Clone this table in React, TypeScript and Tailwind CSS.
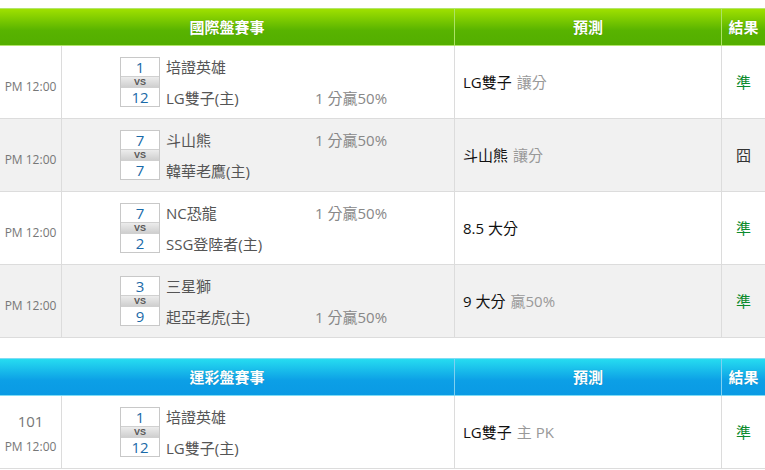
import React from "react";

type Match = {
  no?: string;
  time: string;
  s1: number;
  s2: number;
  t1: string;
  t2: string;
  hcap?: string;
  hcapRow?: 1 | 2;
  pred: string;
  predSub?: string;
  res: string;
};

const intl: Match[] = [
  { time: "PM 12:00", s1: 1, s2: 12, t1: "培證英雄", t2: "LG雙子(主)", hcap: "1 分贏50%", hcapRow: 2, pred: "LG雙子", predSub: "讓分", res: "準" },
  { time: "PM 12:00", s1: 7, s2: 7, t1: "斗山熊", t2: "韓華老鷹(主)", hcap: "1 分贏50%", hcapRow: 1, pred: "斗山熊", predSub: "讓分", res: "囧" },
  { time: "PM 12:00", s1: 7, s2: 2, t1: "NC恐龍", t2: "SSG登陸者(主)", hcap: "1 分贏50%", hcapRow: 1, pred: "8.5 大分", res: "準" },
  { time: "PM 12:00", s1: 3, s2: 9, t1: "三星獅", t2: "起亞老虎(主)", hcap: "1 分贏50%", hcapRow: 2, pred: "9 大分", predSub: "贏50%", res: "準" },
];

const sports: Match[] = [
  { no: "101", time: "PM 12:00", s1: 1, s2: 12, t1: "培證英雄", t2: "LG雙子(主)", pred: "LG雙子", predSub: "主 PK", res: "準" },
];

const cols = "grid grid-cols-[62px_393px_267px_1fr]";

function Header({ title, blue }: { title: string; blue?: boolean }) {
  const bg = blue
    ? "bg-[linear-gradient(to_bottom,#26dcf0,#0c9fe6_60%,#0a9ae4)] border-[#7fdcf4]"
    : "bg-[linear-gradient(to_bottom,#9fe000,#58b300_60%,#53ae00)] border-[#b3e46c]";
  const divider = blue ? "border-[#7fd0f0]" : "border-[#ace266]";
  return (
    <div className={`grid grid-cols-[455px_267px_1fr] h-[38px] border-y ${bg} text-white font-bold text-[15px] [text-shadow:0_0_1px_rgba(0,0,0,0.25)]`}>
      <div className={`flex items-center justify-center border-r ${divider}`}>{title}</div>
      <div className={`flex items-center justify-center border-r ${divider}`}>預測</div>
      <div className="flex items-center justify-center">結果</div>
    </div>
  );
}

function ScoreBox({ s1, s2 }: { s1: number; s2: number }) {
  return (
    <div className="w-[40px] border border-[#c8c8c8] bg-white flex flex-col text-[#1a6aa8] text-[15px] leading-none">
      <div className="h-[19px] flex items-center justify-center border-b border-[#d0d0d0]">{s1}</div>
      <div className="h-[10px] flex items-center justify-center bg-[linear-gradient(to_bottom,#ececec,#cfcfcf)] text-[9px] font-bold text-[#555] font-['Liberation_Sans',sans-serif]">
        VS
      </div>
      <div className="h-[19px] flex items-center justify-center border-t border-[#d0d0d0]">{s2}</div>
    </div>
  );
}

function Row({ m, alt }: { m: Match; alt: boolean }) {
  return (
    <div className={`${cols} h-[73px] border-b border-[#dcdcdc] ${alt ? "bg-[#f1f1f1]" : "bg-white"}`}>
      <div className="flex flex-col items-center justify-center border-r border-[#dcdcdc] text-[#777]">
        {m.no ? (
          <>
            <div className="text-[15px] leading-[26px] mt-[3px]">{m.no}</div>
            <div className="text-[12px] leading-[26px]">{m.time}</div>
          </>
        ) : (
          <div className="text-[12px] leading-[20px] pt-[10px]">{m.time}</div>
        )}
      </div>
      <div className="flex items-center pl-[58px] border-r border-[#dcdcdc] text-[15px]">
        <ScoreBox s1={m.s1} s2={m.s2} />
        <div className="ml-[6px] h-[52px] flex flex-col justify-between pt-[1px] text-[#555]">
          {[m.t1, m.t2].map((t, i) => (
            <div key={i} className="h-[20px] flex items-center leading-none">
              <span className="w-[149px]">{t}</span>
              {m.hcapRow === i + 1 && <span className="text-[#888]">{m.hcap}</span>}
            </div>
          ))}
        </div>
      </div>
      <div className="flex items-center pl-[8px] border-r border-[#dcdcdc] text-[15px]">
        <span className="text-[#111]">{m.pred}</span>
        {m.predSub && <span className="ml-[5px] text-[#999]">{m.predSub}</span>}
      </div>
      <div className={`flex items-center justify-center text-[15px] ${m.res === "準" ? "text-[#0c8a2c]" : "text-[#333]"}`}>
        {m.res}
      </div>
    </div>
  );
}

export default function App() {
  return (
    <div className="w-[765px] h-[470px] overflow-hidden bg-white pt-[8px] font-['Open_Sans','Noto_Sans_CJK_TC',sans-serif]">
      <Header title="國際盤賽事" />
      {intl.map((m, i) => (
        <Row key={i} m={m} alt={i % 2 === 1} />
      ))}
      <div className="h-[20px]" />
      <Header title="運彩盤賽事" blue />
      {sports.map((m, i) => (
        <Row key={i} m={m} alt={false} />
      ))}
    </div>
  );
}
